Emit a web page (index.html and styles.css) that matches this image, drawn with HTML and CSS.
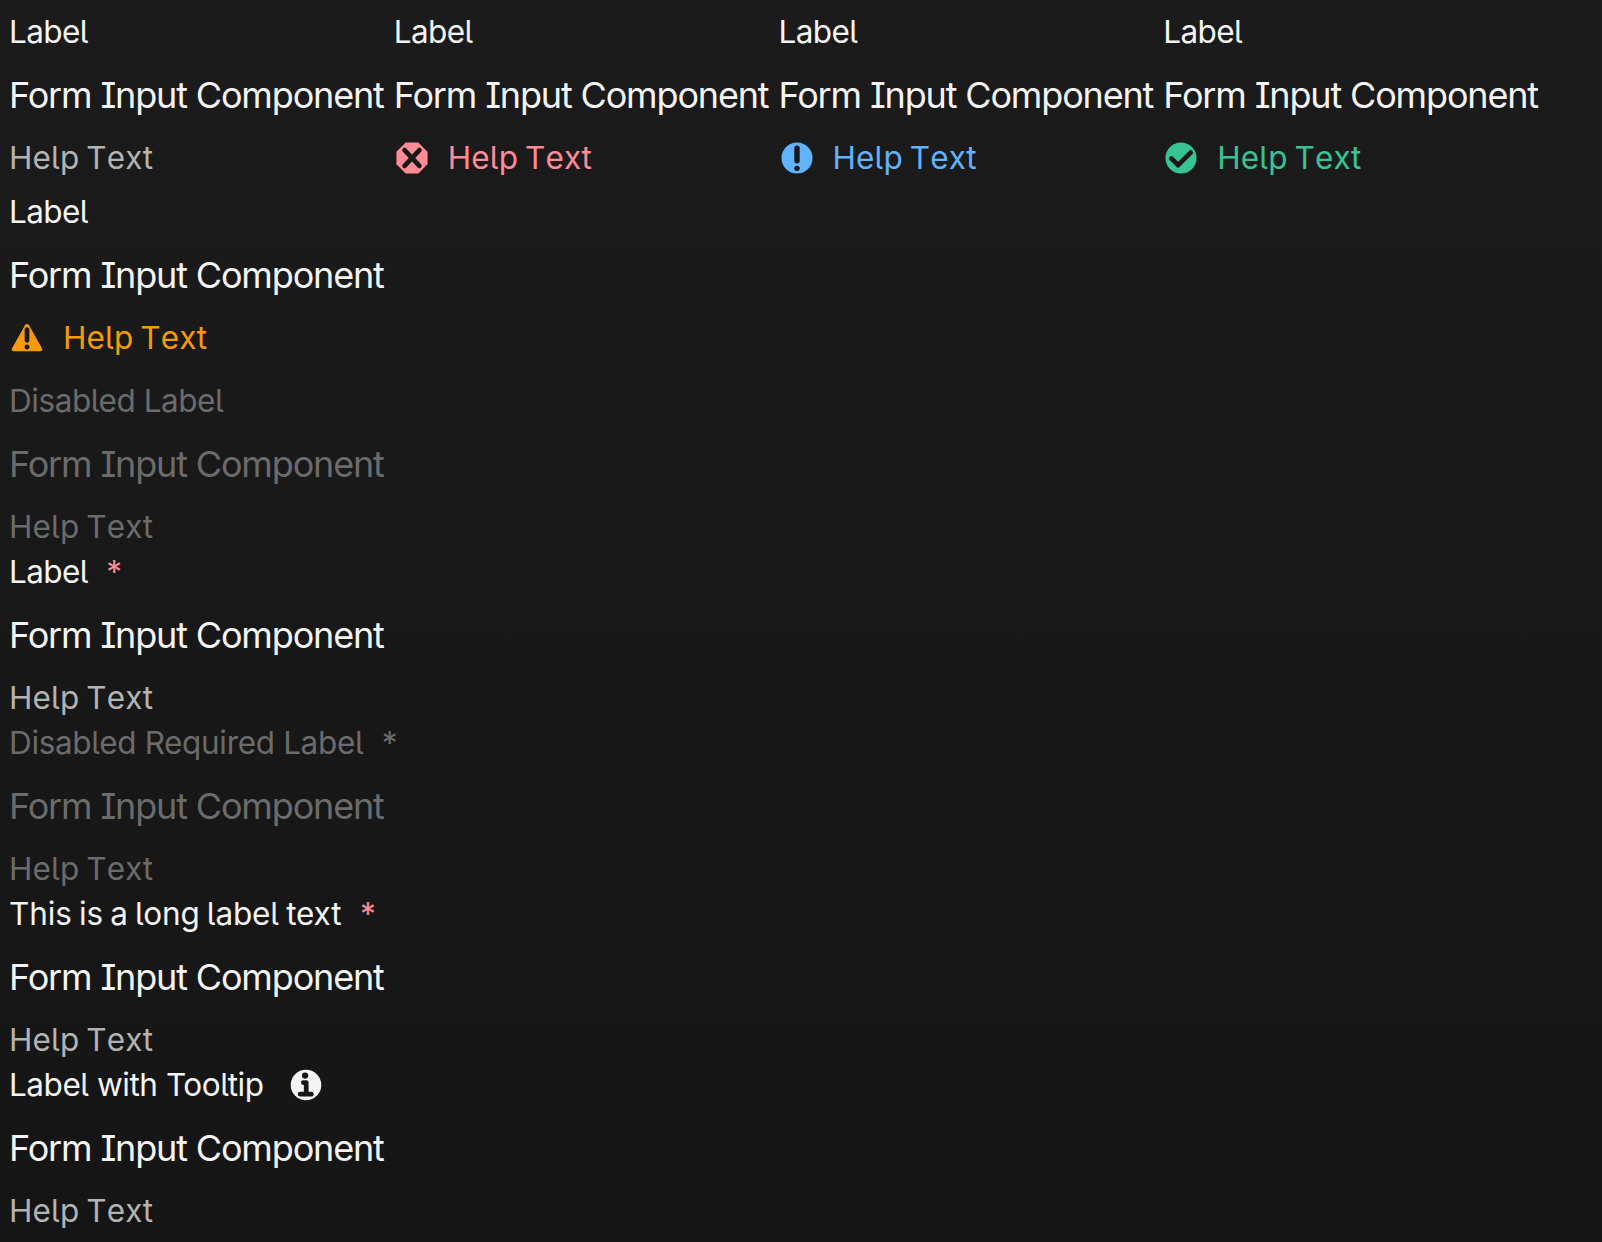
FILE: index.html
```html
<!DOCTYPE html>
<html lang="en">
<head>
<meta charset="utf-8">
<title>Form Fields</title>
<link rel="stylesheet" href="styles.css">
</head>
<body>
<main class="page">
  <div class="group">
    <div class="field">
      <div class="label">Label</div>
      <div class="input">Form Input Component</div>
      <div class="help">Help Text</div>
    </div>
    <div class="field">
      <div class="label">Label</div>
      <div class="input">Form Input Component</div>
      <div class="help error"><svg class="icon" viewBox="-8 -8 16 16"><path class="shape" d="M-2.8-6.9H2.8L6.9-2.8V2.8L2.8 6.9H-2.8L-6.9 2.8V-2.8Z"/><path class="mark" d="M-3.3-3.5L3.3 3.5M3.3-3.5L-3.3 3.5"/></svg>Help Text</div>
    </div>
    <div class="field">
      <div class="label">Label</div>
      <div class="input">Form Input Component</div>
      <div class="help info"><svg class="icon" viewBox="-8 -8 16 16"><circle class="shape" r="6.9"/><rect class="hole" x="-1.2" y="-5.6" width="2.4" height="8" rx="1.2"/><circle class="hole" cy="4.6" r="1.2"/></svg>Help Text</div>
    </div>
    <div class="field">
      <div class="label">Label</div>
      <div class="input">Form Input Component</div>
      <div class="help success"><svg class="icon" viewBox="-8 -8 16 16"><circle class="shape" r="6.9"/><path class="mark" d="M-4.3 .2L-1.3 3.2L4.3-2.4"/></svg>Help Text</div>
    </div>
    <div class="field">
      <div class="label">Label</div>
      <div class="input">Form Input Component</div>
      <div class="help warning"><svg class="icon" viewBox="-8 -8 16 16"><path class="shape" d="M-.9-5.7Q0-6.8 .9-5.7L6.7 4.7Q7 5.9 5.8 5.9H-5.8Q-7 5.9-6.7 4.7Z"/><rect class="hole" x="-1.05" y="-4.8" width="2.1" height="6.9" rx="1.05"/><circle class="hole" cy="4" r="1.1"/></svg>Help Text</div>
    </div>
  </div>
  <div class="field disabled">
    <div class="label medium">Disabled Label</div>
    <div class="input">Form Input Component</div>
    <div class="help">Help Text</div>
  </div>
  <div class="field">
    <div class="label">Label<span class="required">*</span></div>
    <div class="input">Form Input Component</div>
    <div class="help">Help Text</div>
  </div>
  <div class="field disabled">
    <div class="label wide">Disabled Required Label<span class="required">*</span></div>
    <div class="input">Form Input Component</div>
    <div class="help">Help Text</div>
  </div>
  <div class="field">
    <div class="label long">This is a long label text<span class="required">*</span></div>
    <div class="input">Form Input Component</div>
    <div class="help">Help Text</div>
  </div>
  <div class="field">
    <div class="label medium">Label with Tooltip<svg class="icon tip" viewBox="-8 -8 16 16"><circle class="shape" r="6.8"/><circle class="hole" cx="-.4" cy="-4.2" r="1.4"/><path class="mark" d="M-1.2-1.1H.1V4M-2.6 4.1H2.4"/></svg></div>
    <div class="input">Form Input Component</div>
    <div class="help">Help Text</div>
  </div>
</main>
</body>
</html>
```
FILE: styles.css
```css
body {
  margin: 0;
}

.page {
  box-sizing: border-box;
  height: 1242px;
  padding: 9px;
  background: linear-gradient(#1b1b1b, #151515);
  color: #f4f4f4;
  font-family: Inter, sans-serif;
  font-feature-settings: "ss02" 1;
}

.group {
  display: grid;
  grid-template-columns: repeat(4, 384.75px);
  row-gap: 9px;
  margin-bottom: 18px;
}

.label,
.help {
  display: flex;
  align-items: center;
  height: 45px;
  font-size: 31.5px;
  line-height: 45px;
  white-space: nowrap;
}

.label {
  letter-spacing: -0.6px;
}

.medium {
  letter-spacing: -0.45px;
}

.wide {
  letter-spacing: -0.34px;
}

.long {
  letter-spacing: -0.12px;
  word-spacing: -1.5px;
}

.input {
  height: 81px;
  font-size: 36px;
  line-height: 83px;
  letter-spacing: -1.16px;
  white-space: nowrap;
}

.help {
  color: #b3b3b3;
  font-kerning: none;
  letter-spacing: 0.15px;
  word-spacing: -2px;
}

.required {
  margin-left: 18.5px;
  color: #ff8b96;
}

.icon {
  width: 36px;
  height: 36px;
  margin-right: 18px;
}

.tip {
  margin-left: 24.5px;
}

.shape {
  fill: currentColor;
}

.hole {
  fill: #181818;
}

.mark {
  fill: none;
  stroke: #181818;
  stroke-width: 2.1;
  stroke-linecap: round;
  stroke-linejoin: round;
}

.error { color: #ff8b96; }
.info { color: #60b3fc; }
.success { color: #38c395; }
.warning { color: #f59b0b; }

.disabled,
.disabled .help,
.disabled .required {
  color: #6b6b6b;
}
```
